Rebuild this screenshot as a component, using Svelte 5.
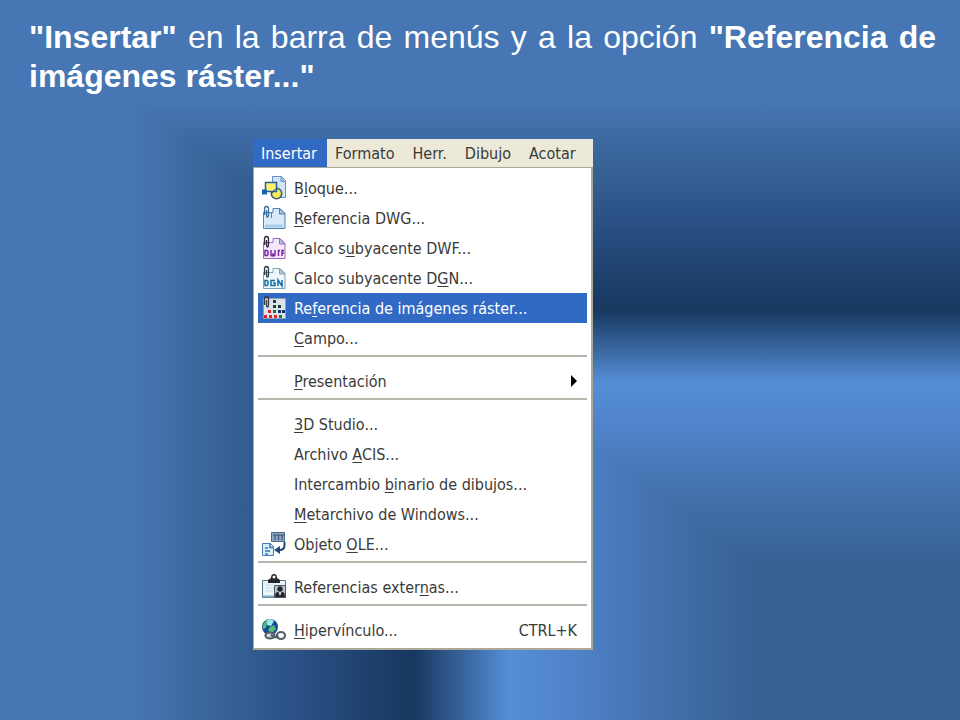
<script>
  const titles = ['Insertar', 'Formato', 'Herr.', 'Dibujo', 'Acotar'];

  // Each label is split around its underlined access key.
  const groups = [
    [
      { icon: 'block', label: ['B', 'l', 'oque...'] },
      { icon: 'dwg', label: ['', 'R', 'eferencia DWG...'] },
      { icon: 'dwf', label: ['Calco s', 'u', 'byacente DWF...'] },
      { icon: 'dgn', label: ['Calco subyacente D', 'G', 'N...'] },
      { icon: 'raster', label: ['Re', 'f', 'erencia de imágenes ráster...'], active: true },
      { label: ['', 'C', 'ampo...'] }
    ],
    [{ label: ['', 'P', 'resentación'], submenu: true }],
    [
      { label: ['', '3', 'D Studio...'] },
      { label: ['Archivo ', 'A', 'CIS...'] },
      { label: ['Intercambio ', 'b', 'inario de dibujos...'] },
      { label: ['', 'M', 'etarchivo de Windows...'] },
      { icon: 'ole', label: ['Objeto ', 'O', 'LE...'] }
    ],
    [{ icon: 'xref', label: ['Referencias exter', 'n', 'as...'] }],
    [{ icon: 'link', label: ['', 'H', 'ipervínculo...'], shortcut: 'CTRL+K' }]
  ];
</script>

{#snippet sheet(stroke, fill)}
  <path d="M2.500 7.500H12V3.500h7l5 5V23.500H2.500Z" {fill} {stroke} />
  <path d="M18.500 3.500V9H24Z" fill="#a9c7df" {stroke} />
{/snippet}

{#snippet clip(color)}
  <path d="M3.500 10V4q0-2.500 2-2.500T7.500 4v6q0 2-1 2T5.500 10V5" fill="none" stroke={color} stroke-width="1.300" />
{/snippet}

{#snippet icon(name)}
  <svg class="icon" viewBox="0 0 26 26" aria-hidden="true">
    {#if name === 'block'}
      <path d="M11.500 1.500h9l4 4V22.500h-13Z" fill="#d3e5f5" stroke="#6592c0" />
      <path d="M20 1.500v5h4.500" fill="#9bbddd" stroke="#6592c0" />
      <circle cx="15.500" cy="18.500" r="5.200" fill="#f5ea58" stroke="#3b5966" stroke-width="1.500" />
      <path d="M4.500 7.500h11v9h-11Z" fill="#fff36b" stroke="#255da0" stroke-width="1.500" />
      <path d="M11 18.500q1-4 4.500-4.500" fill="none" stroke="#3b5966" />
      <path d="M1 14.500h5v5H1Z" fill="#1761ad" />
    {:else if name === 'dwg'}
      {@render sheet('#4f83b1', '#d9eafa')}
      <path d="M4 21h18" stroke="#a7cce9" stroke-width="3" />
      {@render clip('#356b9e')}
      <path d="M10.500 8v5" stroke="#4f83b1" />
    {:else if name === 'dwf'}
      {@render sheet('#a06abd', '#f4e8fa')}
      {@render clip('#30253b')}
      <path d="M4 15.500v5h2l1-1v-3l-1-1ZM10 15v5l1 1 1-2 1 2 1-1v-5M17.500 15v6M17 15.500h2M23 15.500h-2v5.500M21 18h2" fill="none" stroke="#74219d" stroke-width="1.400" />
    {:else if name === 'dgn'}
      {@render sheet('#7d9fb8', '#edf7fc')}
      {@render clip('#263746')}
      <path d="M4 15.500v5h2l1-1v-3l-1-1ZM14 15.500h-4v5h4v-2.500h-2M17 21v-6l4 6v-6" fill="none" stroke="#176da7" stroke-width="1.500" />
    {:else if name === 'raster'}
      <path d="M2.500 3.500h22v20h-22Z" fill="#dce4ea" stroke="#91a0b1" />
      {@render clip('#343a40')}
      <path d="M12 5h3v3h-3ZM12 10h3v3h-3ZM17 10h3v3h-3Z" fill="#203e34" />
      <path d="M7 15h3v3H7ZM3 20h3v3H3ZM8 20h3v3H8ZM13 20h3v3h-3Z" fill="#e51e30" />
      <path d="M12 15h3v3h-3ZM18 20h3v3h-3Z" fill="#17763e" />
      <path d="M17 15h3v3h-3ZM21 15h3v3h-3Z" fill="#142b78" />
    {:else if name === 'ole'}
      <path d="M10.500 1.500h13v9h-13Z" fill="#8fa9c4" stroke="#496a8c" />
      <path d="M12 4h11M14 4v5M17.500 4v5M21 4v5" stroke="#38536f" stroke-width="1.200" />
      <path d="M1.500 12.500h8l3 3v9h-11Z" fill="#d9effb" stroke="#477db4" />
      <path d="M9 12.500v4h3.500M4 17h3M4 20h5M4 23h3" fill="none" stroke="#367bb6" stroke-width="1.500" />
      <path d="M23.500 11v3q0 5-5 5" fill="none" stroke="#204878" stroke-width="2" />
      <path d="m13 19 6-4v8Z" fill="#204878" />
    {:else if name === 'xref'}
      <path d="M1.500 6.500h23v17h-23Z" fill="#e9f5f9" stroke="#58758a" />
      <path d="M2 22.500h22" stroke="#81afc6" stroke-width="2" />
      <path d="M5 11h7M5 14h8M5 17h7" stroke="#c7dce6" />
      <path d="M7 9V6l3-2q0-4 3-4t3 4l3 2v3Z" fill="#20262b" />
      <circle cx="13" cy="3" r="1.500" fill="#fff" />
      <path d="M13.500 11.500h11v12h-11Z" fill="#b7c2ca" stroke="#4d5860" />
      <circle cx="19" cy="15" r="2.700" fill="#21252b" />
      <path d="M14 23q0-5 3-5l2 2 2-2q3 0 3 5Z" fill="#21252b" />
      <path d="m18 19 1 3 1-3Z" fill="#fff" />
    {:else if name === 'link'}
      <circle cx="9" cy="10" r="8" fill="#164c95" />
      <path d="M2 8q2-6 8-6-1 3-4 4l-1 5-3 1ZM9 10l4-2 2 4-5 5-3-4Z" fill="#54bd76" />
      <path d="M6 3q5-2 7 1l-3 5-4-1Z" fill="#9ee8f0" />
      <g fill="none" stroke="#555e66" stroke-width="2.200">
        <ellipse cx="9" cy="18.500" rx="4.500" ry="3" fill="#d8dce0" />
        <ellipse cx="20" cy="18.500" rx="4" ry="3.500" fill="#fff" />
        <path d="M10 17.500q4 5 7 1" />
      </g>
    {/if}
  </svg>
{/snippet}

<main>
  <p class="intro">
    <strong>"Insertar"</strong> en la barra de menús y a la opción
    <strong>"Referencia de imágenes ráster..."</strong>
  </p>

  <section class="window" aria-label="Menú Insertar">
    <nav class="bar">
      {#each titles as title, i}
        <button class="title" class:open={i === 0}>{title}</button>
      {/each}
    </nav>
    <div class="menu">
      {#each groups as group}
        <div class="group">
          {#each group as item}
            <button class="item" class:active={item.active}>
              <span class="slot">{#if item.icon}{@render icon(item.icon)}{/if}</span>
              <span class="label">{item.label[0]}<u>{item.label[1]}</u>{item.label[2]}</span>
              {#if item.shortcut}<span class="shortcut">{item.shortcut}</span>{/if}
              {#if item.submenu}<span class="arrow"></span>{/if}
            </button>
          {/each}
        </div>
      {/each}
    </div>
  </section>
</main>

<style>
  :global(body) {
    margin: 0;
  }

  main {
    --stops: #4676b4 0%, #4676b4 14%, #366093 24%, #2a5085 31%, #17375e 43%,
      #558ed5 53%, #4f82c8 60%, #4472ae 68%, #376092 79%, #376092 100%;
    position: relative;
    isolation: isolate;
    box-sizing: border-box;
    min-height: 100vh;
    padding: 18px 24px 70px 29px;
    background: linear-gradient(to right, var(--stops));
    font-family: "Liberation Sans", Arial, sans-serif;
  }

  /* The same ramp runs downwards above the diagonal. */
  main::before {
    content: '';
    position: absolute;
    inset: 0;
    z-index: -1;
    background: linear-gradient(to bottom, var(--stops));
    clip-path: polygon(0 0, 100% 0, 100% 100%);
  }

  .intro {
    margin: 0;
    color: #fff;
    font-size: 32px;
    line-height: 39px;
    text-align: justify;
  }

  .window {
    width: 340px;
    margin: 43px auto 0 224px;
    font-family: "DejaVu Sans Condensed", Tahoma, sans-serif;
    font-size: 16px;
  }

  .bar {
    display: flex;
    height: 28px;
    background: #ece9d8;
  }

  button {
    border: 0;
    background: none;
    color: #3a3a3a;
    font: inherit;
  }

  .title {
    padding: 0 10px 0 8px;
  }

  .title.open {
    background: #316ac5;
    color: #fff;
  }

  .menu {
    padding: 5px 4px 3px;
    border: 1px solid #aca899;
    border-right-width: 2px;
    border-bottom-width: 2px;
    background: #fff;
  }

  .group + .group {
    margin-top: 2px;
    padding-top: 9px;
    border-top: 2px solid #b9b7ad;
  }

  .item {
    display: flex;
    align-items: center;
    width: 100%;
    height: 30px;
    padding: 0 10px 0 3px;
    text-align: left;
  }

  .item.active {
    background: #316ac5;
    color: #fff;
  }

  .slot {
    width: 33px;
    height: 26px;
  }

  .icon {
    display: block;
    width: 26px;
    height: 26px;
  }

  .label {
    flex: 1;
    white-space: nowrap;
  }

  u {
    text-decoration-thickness: 1px;
    text-underline-offset: 2px;
  }

  .arrow {
    border: 6px solid transparent;
    border-left-color: #000;
    border-right-width: 0;
  }
</style>
